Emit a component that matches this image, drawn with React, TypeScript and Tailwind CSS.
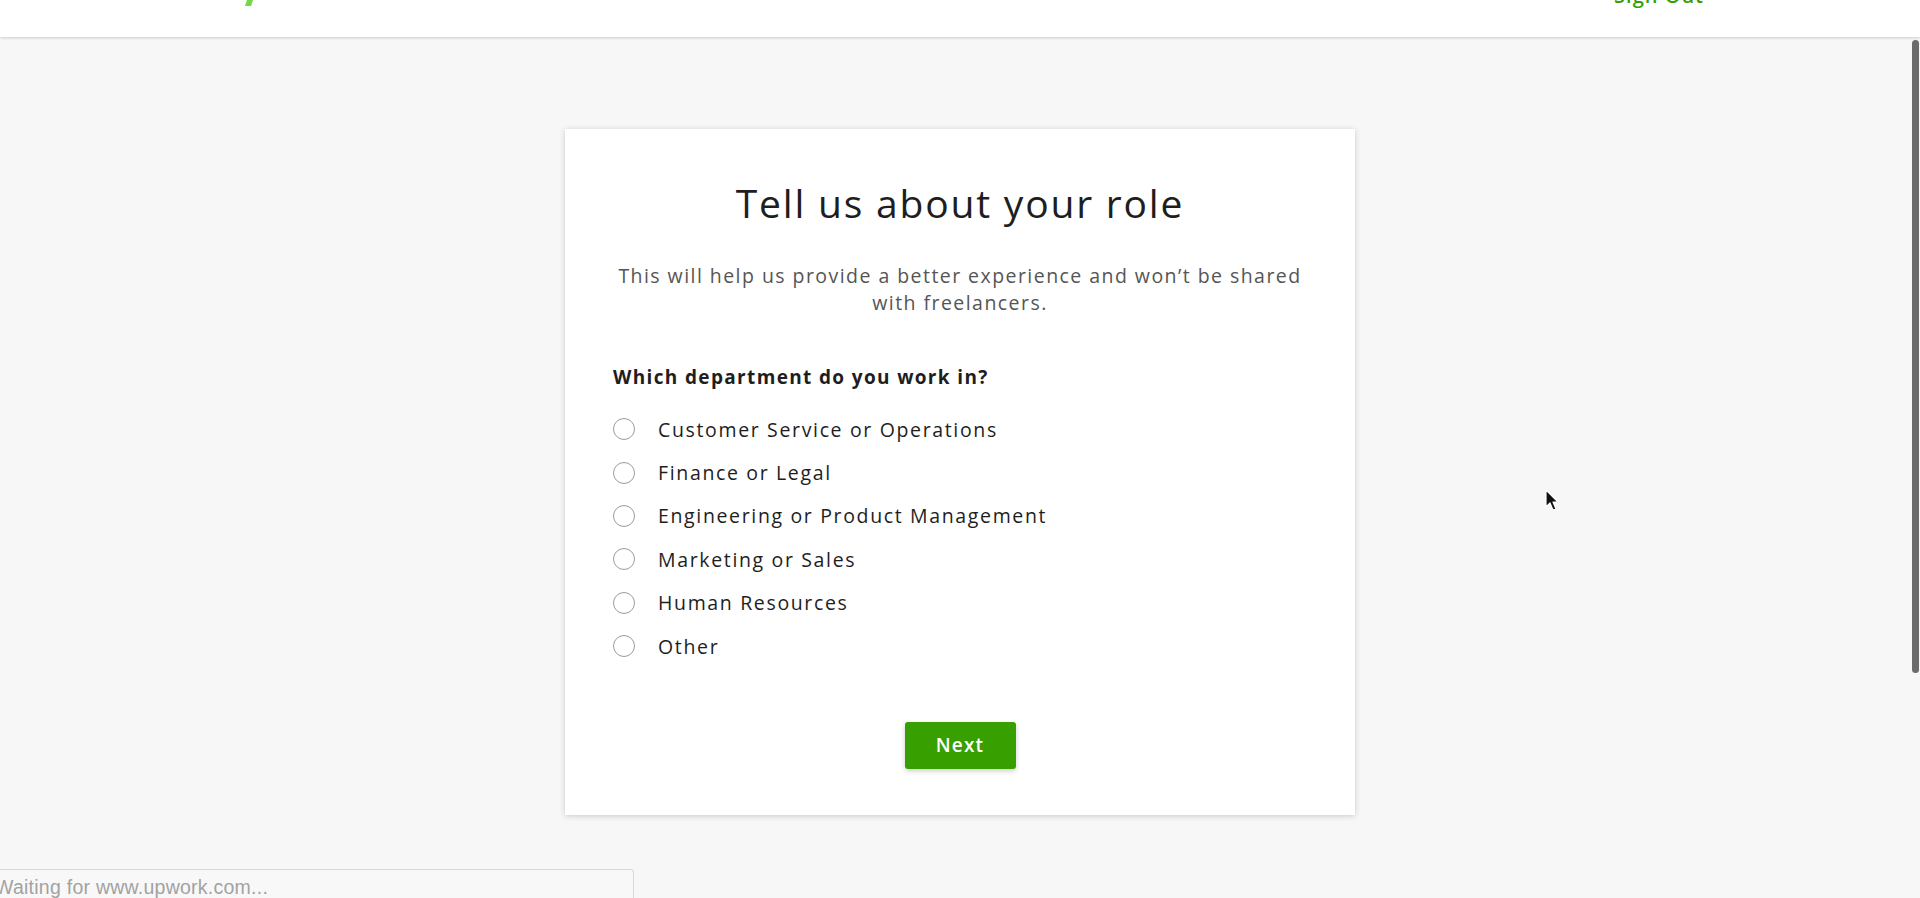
import { useState } from 'react';

const departments = [
  'Customer Service or Operations',
  'Finance or Legal',
  'Engineering or Product Management',
  'Marketing or Sales',
  'Human Resources',
  'Other',
];

export default function App() {
  const [picked, setPicked] = useState<string | null>(null);

  return (
    <div
      className="relative h-[898px] w-full overflow-hidden bg-[#f7f7f7] text-[#222]"
      style={{ fontFamily: '"Open Sans", "Liberation Sans", sans-serif' }}
    >
      {/* Header (scrolled, only bottom visible) */}
      <header className="relative z-10 h-[37px] bg-white shadow-[0_1px_3px_rgba(0,0,0,0.18)]">
        <div className="flex h-full items-start justify-between pl-[245px] pr-[216px]">
          <svg width="8" height="6" viewBox="0 0 8 6">
            <path d="M2 0 L8 0 L6 6 L0 6 Z" fill="#6fda44" />
          </svg>
          <span className="-mt-[14px] text-[20px] font-semibold leading-[20px] tracking-[1px] text-[#37a000]">Sign Out</span>
        </div>
      </header>

      {/* Main */}
      <main className="flex justify-center pt-[92px]">
        <div className="w-[790px] bg-white px-[48px] pb-[46px] pt-[52px] shadow-[0_1px_6px_rgba(0,0,0,0.18)]">
          <h1 className="text-center text-[39px] font-normal leading-[44px] tracking-[1.8px] text-[#1e1e1e]">
            Tell us about your role
          </h1>
          <p className="mx-auto mt-[37px] text-center text-[19.5px] leading-[27px] tracking-[1.45px] text-[#555]">
            This will help us provide a better experience and won’t be shared
            <br />
            with freelancers.
          </p>

          <h2 className="mt-[48.5px] text-[19px] font-bold leading-[24px] tracking-[1.35px] text-[#1e1e1e]">
            Which department do you work in?
          </h2>

          <div className="mt-[19px] flex flex-col">
            {departments.map((d) => (
              <label key={d} className="flex h-[43.4px] cursor-pointer items-center" onClick={() => setPicked(d)}>
                <span className="flex h-[22px] w-[22px] items-center justify-center rounded-full border-[1.5px] border-[#9b9b9b] bg-white">
                  {picked === d && <span className="h-[10px] w-[10px] rounded-full bg-[#37a000]" />}
                </span>
                <span className="ml-[23px] text-[19.5px] tracking-[1.65px] text-[#1e1e1e]">{d}</span>
              </label>
            ))}
          </div>

          <div className="mt-[54px] flex justify-center">
            <button className="h-[47px] w-[111px] rounded-[3px] bg-[#37a000] text-[19px] font-semibold tracking-[1.2px] text-white shadow-[0_2px_5px_rgba(0,0,0,0.2)]">
              Next
            </button>
          </div>
        </div>
      </main>

      {/* Scrollbar */}
      <div className="absolute right-[1px] top-[40px] h-[633px] w-[7px] rounded-full bg-[#6b6b6b]" />

      {/* Cursor */}
      <svg className="absolute left-[1545px] top-[489px]" width="16" height="24" viewBox="0 0 16 24">
        <path d="M1 1 L1 18 L5 14 L8 21 L11 20 L8 13 L13 13 Z" fill="#111" stroke="#fff" strokeWidth="1.2" strokeLinejoin="round" />
      </svg>

      {/* Status bubble */}
      <div className="absolute left-0 top-[869px] h-[40px] w-[634px] rounded-tr-[4px] border-r border-t border-[#d8d8d8] bg-[#f8f8f8]">
        <span
          className="-ml-[5px] block pt-[5px] text-[19.5px] leading-[24px] tracking-[0.25px] text-[#a2a2a2]"
          style={{ fontFamily: '"Liberation Sans", sans-serif' }}
        >
          Waiting for www.upwork.com...
        </span>
      </div>
    </div>
  );
}
